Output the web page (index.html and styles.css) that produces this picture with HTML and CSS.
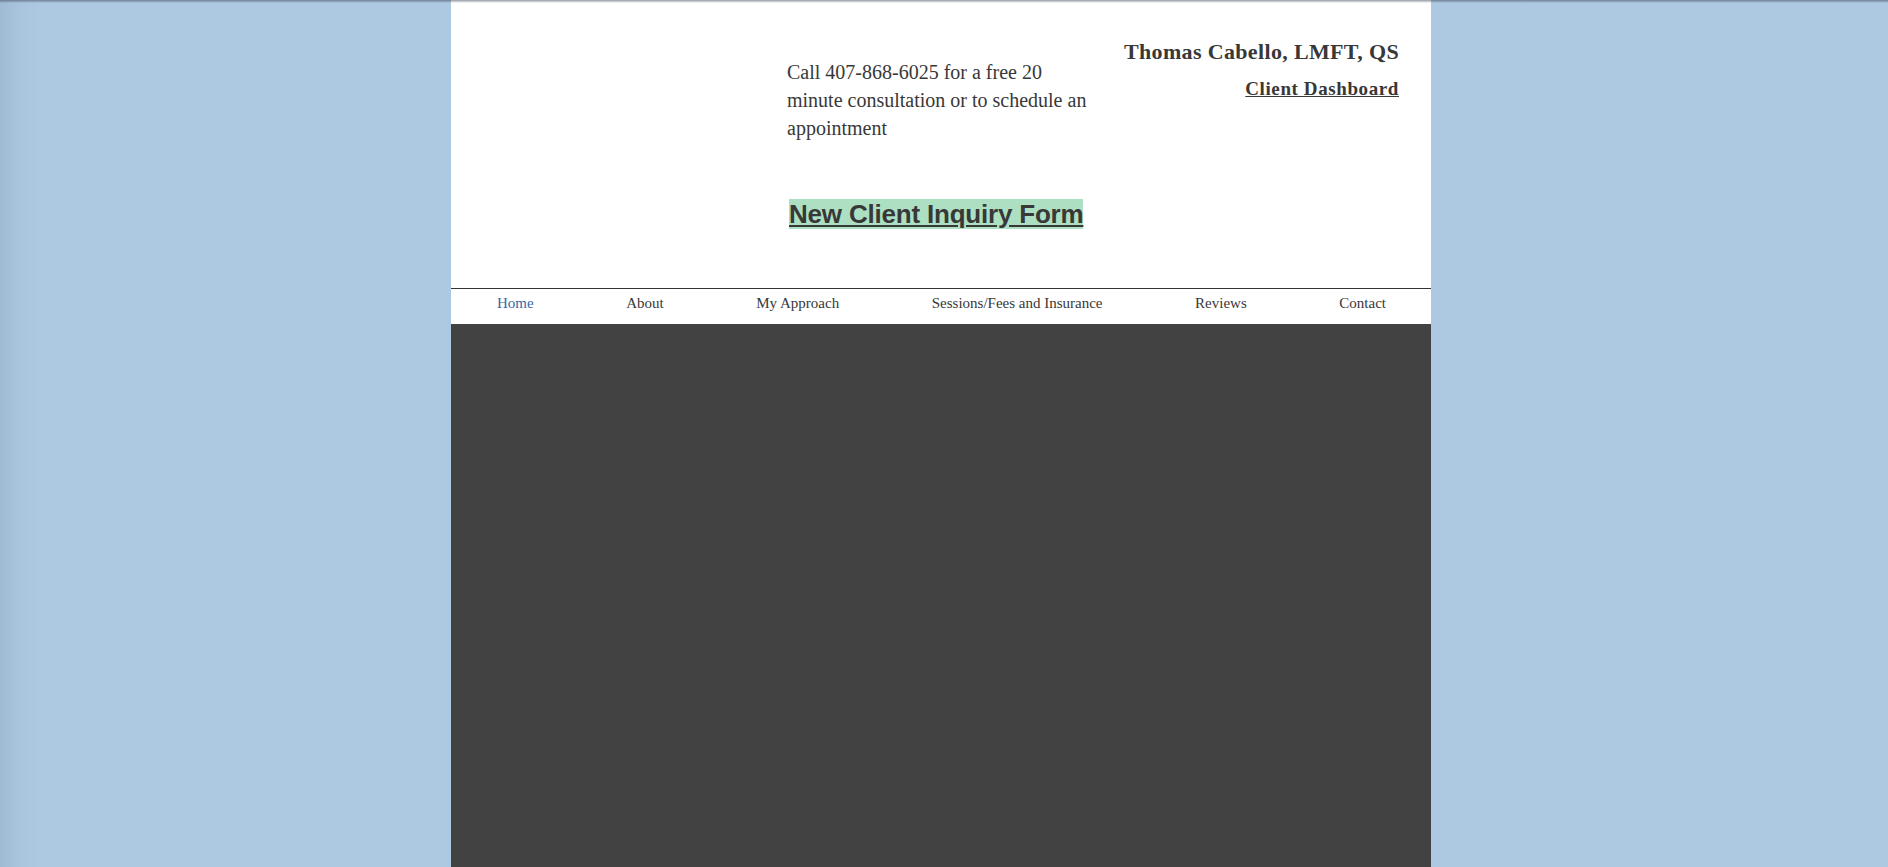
FILE: index.html
```html
<!DOCTYPE html>
<html lang="en">
<head>
<meta charset="utf-8">
<title>Thomas Cabello, LMFT, QS</title>
<link rel="stylesheet" href="styles.css">
</head>
<body>
<div class="top-shadow"></div>
<div class="page">
  <header class="header">
    <div class="header-row">
      <p class="phone">Call 407-868-6025 for a free 20<br>minute consultation or to schedule an<br>appointment</p>
      <div class="brand">
        <h1 class="name">Thomas Cabello, LMFT, QS</h1>
        <a class="dashboard" href="#">Client Dashboard</a>
      </div>
    </div>
    <div class="inquiry-row">
      <a class="inquiry" href="#">New Client Inquiry Form</a>
    </div>
  </header>
  <nav class="nav">
    <a class="nav-link active" href="#">Home</a>
    <a class="nav-link" href="#">About</a>
    <a class="nav-link" href="#">My Approach</a>
    <a class="nav-link" href="#">Sessions/Fees and Insurance</a>
    <a class="nav-link" href="#">Reviews</a>
    <a class="nav-link" href="#">Contact</a>
  </nav>
  <main class="hero"></main>
</div>
</body>
</html>
```
FILE: styles.css
```css
html, body {
  margin: 0;
  padding: 0;
  height: 100%;
}
body {
  background: linear-gradient(to right, #9fbad3 0px, #a9c4dc 20px, #adc8e1 40px, #adc8e1 100%);
  font-family: "Liberation Serif", "Times New Roman", serif;
  color: #383838;
  overflow: hidden;
}
.top-shadow {
  position: absolute;
  left: 0;
  top: 0;
  right: 0;
  height: 3px;
  background: linear-gradient(to bottom, rgba(60, 70, 90, 0.55), rgba(60, 70, 90, 0));
  pointer-events: none;
  z-index: 2;
}
.page {
  width: 980px;
  margin-left: 451px;
  height: 100%;
  display: flex;
  flex-direction: column;
}
.header {
  background: #fff;
  height: 288px;
  flex: none;
  box-sizing: border-box;
  padding-top: 37px;
}
.header-row {
  display: flex;
  align-items: flex-start;
}
.phone {
  margin: 21px 0 0 336px;
  font-size: 20px;
  line-height: 28px;
  color: #383838;
}
.brand {
  margin-left: auto;
  padding-right: 32px;
  display: flex;
  flex-direction: column;
  align-items: flex-end;
}
.name {
  margin: 0;
  font-size: 22px;
  line-height: 30px;
  font-weight: bold;
  letter-spacing: 0.35px;
  color: #383838;
}
.dashboard {
  margin-top: 10px;
  font-size: 19px;
  line-height: 24px;
  font-weight: bold;
  letter-spacing: 0.6px;
  color: #383838;
  text-decoration: underline;
}
.inquiry-row {
  padding-left: 338px;
  margin-top: 57px;
}
.inquiry {
  display: inline-block;
  background: #ade0c3;
  font-family: "Liberation Sans", Arial, sans-serif;
  font-weight: bold;
  font-size: 26px;
  line-height: 30px;
  letter-spacing: -0.2px;
  color: #383838;
  text-decoration: underline;
}
.nav {
  background: #fff;
  border-top: 1px solid #333;
  height: 36px;
  flex: none;
  box-sizing: border-box;
  padding: 3px 45px 0 46px;
  display: flex;
  justify-content: space-between;
  align-items: flex-start;
}
.nav-link {
  font-size: 15px;
  line-height: 22px;
  color: #383838;
  text-decoration: none;
}
.nav-link.active {
  color: #3569a8;
}
.hero {
  flex: 1;
  background: #424242;
}
```
